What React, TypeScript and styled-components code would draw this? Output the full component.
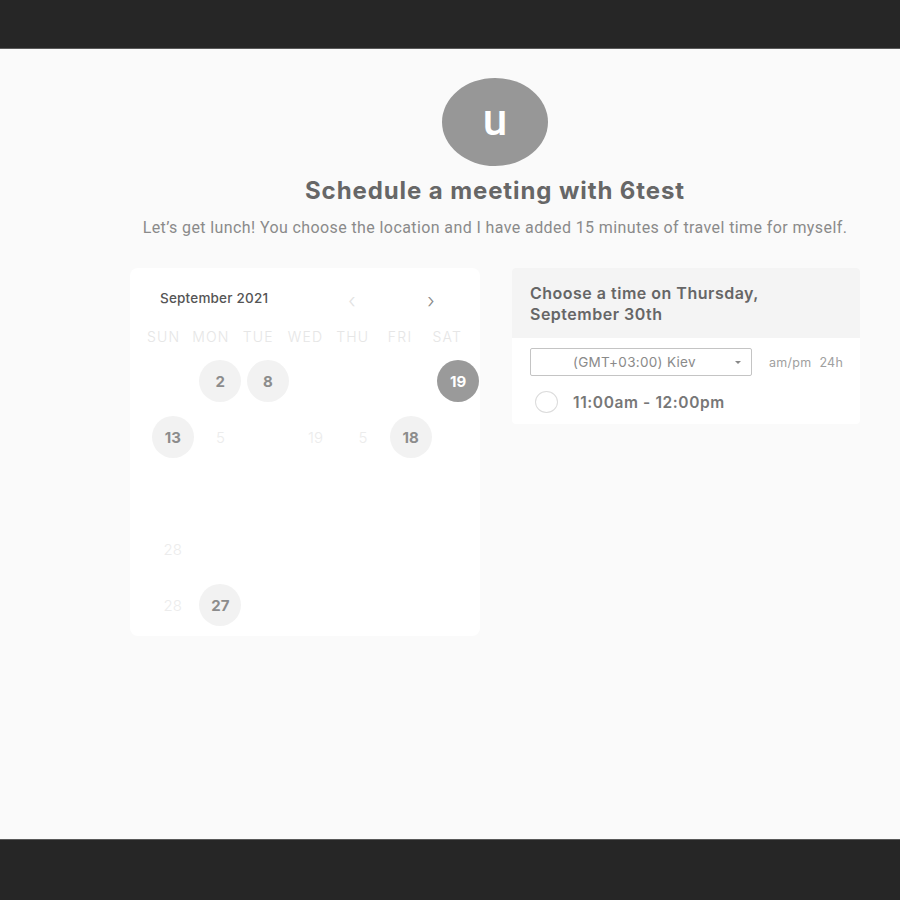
import React from "react";
import styled, { createGlobalStyle } from "styled-components";

const GlobalStyle = createGlobalStyle`
  html, body { margin: 0; padding: 0; background: #262626; }
  body { font-family: Inter, "Noto Sans", sans-serif; }
  * { box-sizing: border-box; }
`;

const Page = styled.div`
  display: flex;
  flex-direction: column;
  height: 900px;
  width: 900px;
`;

const Bar = styled.div<{ $h: number; $edge: "top" | "bottom" }>`
  height: ${(p) => p.$h}px;
  background: #262626;
  ${(p) => (p.$edge === "top" ? "border-bottom: 1px solid #5a5a5a;" : "border-top: 1px solid #5a5a5a;")}
  flex: none;
`;

const Main = styled.main`
  flex: 1;
  background: #fafafa;
  padding: 29px 40px 0 130px;
`;

const Container = styled.div`
  width: 730px;
  display: flex;
  flex-direction: column;
  align-items: center;
`;

const Avatar = styled.div`
  width: 106px;
  height: 88px;
  border-radius: 50%;
  background: #979797;
  color: #fff;
  display: flex;
  align-items: center;
  justify-content: center;
  font-family: Roboto, sans-serif;
  font-size: 44px;
  font-weight: 500;
  line-height: 1;
  padding-bottom: 4px;
`;

const Title = styled.h1`
  margin: 11px 0 0;
  font-size: 24px;
  font-weight: 700;
  color: #676767;
  line-height: 28px;
  letter-spacing: 0.9px;
`;

const Subtitle = styled.p`
  margin: 13px 0 0;
  font-family: Roboto, sans-serif;
  font-size: 16px;
  font-weight: 400;
  color: #8a8a8a;
  line-height: 20px;
  letter-spacing: 0.4px;
`;

const Cards = styled.div`
  align-self: stretch;
  margin-top: 30px;
  display: flex;
  gap: 32px;
  align-items: flex-start;
`;

const CalendarCard = styled.section`
  width: 350px;
  background: #fff;
  border-radius: 8px;
  padding: 18px 0 3px;
`;

const CalHeader = styled.div`
  display: flex;
  align-items: center;
  padding: 0 37px 0 30px;
  height: 24px;
`;

const MonthLabel = styled.div`
  flex: 1;
  font-size: 13.5px;
  font-weight: 500;
  color: #555;
  letter-spacing: 0.2px;
`;

const NavGroup = styled.div`
  display: flex;
  gap: 55px;
  padding-top: 6px;
`;

const NavButton = styled.span<{ $faint?: boolean }>`
  width: 24px;
  text-align: center;
  font-size: 20px;
  font-weight: 300;
  color: ${(p) => (p.$faint ? "#e2e2e2" : "#8a8a8a")};
`;

const WeekRow = styled.div`
  margin: 11px 0 0 10px;
  width: 331px;
  display: grid;
  grid-template-columns: repeat(7, 1fr);
  height: 30px;
  align-items: center;
`;

const WeekDay = styled.span`
  text-align: center;
  font-size: 14px;
  font-weight: 300;
  letter-spacing: 1.2px;
  color: #e6e6e6;
`;

const DayGrid = styled.div`
  margin: 2px 0 0 19px;
  width: 333px;
  display: grid;
  grid-template-columns: repeat(7, 1fr);
  grid-auto-rows: 56px;
`;

const DayCell = styled.div`
  display: flex;
  align-items: center;
  justify-content: center;
`;

type DayKind = "available" | "selected" | "faint";

const Day = styled.span<{ $kind: DayKind }>`
  width: 42px;
  height: 42px;
  border-radius: 50%;
  display: flex;
  align-items: center;
  justify-content: center;
  font-size: 15px;
  font-weight: ${(p) => (p.$kind === "faint" ? 300 : 700)};
  background: ${(p) =>
    p.$kind === "selected" ? "#9a9a9a" : p.$kind === "available" ? "#f2f2f2" : "transparent"};
  color: ${(p) =>
    p.$kind === "selected" ? "#fff" : p.$kind === "available" ? "#8c8c8c" : "#ececec"};
`;

const TimePanel = styled.section`
  width: 348px;
  background: #fff;
  border-radius: 4px;
  overflow: hidden;
`;

const PanelHeader = styled.div`
  background: #f4f4f4;
  height: 70px;
  padding: 15px 18px 0;
  font-size: 16px;
  font-weight: 600;
  color: #666;
  line-height: 21px;
  letter-spacing: 0.5px;
`;

const PanelBody = styled.div`
  padding: 10px 18px 11px;
`;

const ZoneRow = styled.div`
  display: flex;
  align-items: center;
  gap: 17px;
`;

const Select = styled.div`
  flex: none;
  width: 222px;
  height: 28px;
  border: 1px solid #c4c4c4;
  border-radius: 2px;
  display: flex;
  align-items: center;
  padding: 0 10px 0 42px;
  font-size: 13.5px;
  color: #8a8a8a;
  letter-spacing: 0.3px;
`;

const SelectText = styled.span`
  flex: 1;
`;

const Caret = styled.span`
  width: 0;
  height: 0;
  border-left: 3px solid transparent;
  border-right: 3px solid transparent;
  border-top: 3px solid #888;
`;

const FormatToggle = styled.span`
  flex: none;
  white-space: nowrap;
  font-size: 12.5px;
  color: #a0a0a0;
  word-spacing: 4px;
  letter-spacing: 0.3px;
`;

const SlotRow = styled.div`
  display: flex;
  align-items: center;
  margin-top: 15px;
  padding-left: 5px;
  gap: 15px;
`;

const Radio = styled.span`
  width: 23px;
  height: 22px;
  border-radius: 50%;
  border: 1px solid #dcdcdc;
`;

const SlotLabel = styled.span`
  font-size: 15.5px;
  font-weight: 600;
  color: #777;
  letter-spacing: 0.6px;
`;

const weekdays = ["SUN", "MON", "TUE", "WED", "THU", "FRI", "SAT"];

type Cell = { label: string; kind: DayKind } | null;

const rows: Cell[][] = [
  [null, { label: "2", kind: "available" }, { label: "8", kind: "available" }, null, null, null, { label: "19", kind: "selected" }],
  [
    { label: "13", kind: "available" },
    { label: "5", kind: "faint" },
    null,
    { label: "19", kind: "faint" },
    { label: "5", kind: "faint" },
    { label: "18", kind: "available" },
    null,
  ],
  [null, null, null, null, null, null, null],
  [{ label: "28", kind: "faint" }, null, null, null, null, null, null],
  [{ label: "28", kind: "faint" }, { label: "27", kind: "available" }, null, null, null, null, null],
];

export default function App() {
  return (
    <>
      <GlobalStyle />
      <Page>
        <Bar $h={49} $edge="top" />
        <Main>
          <Container>
            <Avatar>u</Avatar>
            <Title>Schedule a meeting with 6test</Title>
            <Subtitle>
              Let’s get lunch! You choose the location and I have added 15 minutes of travel time for myself.
            </Subtitle>
            <Cards>
              <CalendarCard>
                <CalHeader>
                  <MonthLabel>September 2021</MonthLabel>
                  <NavGroup>
                    <NavButton $faint>‹</NavButton>
                    <NavButton>›</NavButton>
                  </NavGroup>
                </CalHeader>
                <WeekRow>
                  {weekdays.map((d) => (
                    <WeekDay key={d}>{d}</WeekDay>
                  ))}
                </WeekRow>
                <DayGrid>
                  {rows.flatMap((row, ri) =>
                    row.map((c, ci) => (
                      <DayCell key={`${ri}-${ci}`}>
                        {c && <Day $kind={c.kind}>{c.label}</Day>}
                      </DayCell>
                    ))
                  )}
                </DayGrid>
              </CalendarCard>
              <TimePanel>
                <PanelHeader>
                  Choose a time on Thursday,
                  <br />
                  September 30th
                </PanelHeader>
                <PanelBody>
                  <ZoneRow>
                    <Select>
                      <SelectText>(GMT+03:00) Kiev</SelectText>
                      <Caret />
                    </Select>
                    <FormatToggle>am/pm 24h</FormatToggle>
                  </ZoneRow>
                  <SlotRow>
                    <Radio />
                    <SlotLabel>11:00am - 12:00pm</SlotLabel>
                  </SlotRow>
                </PanelBody>
              </TimePanel>
            </Cards>
          </Container>
        </Main>
        <Bar $h={61} $edge="bottom" />
      </Page>
    </>
  );
}
